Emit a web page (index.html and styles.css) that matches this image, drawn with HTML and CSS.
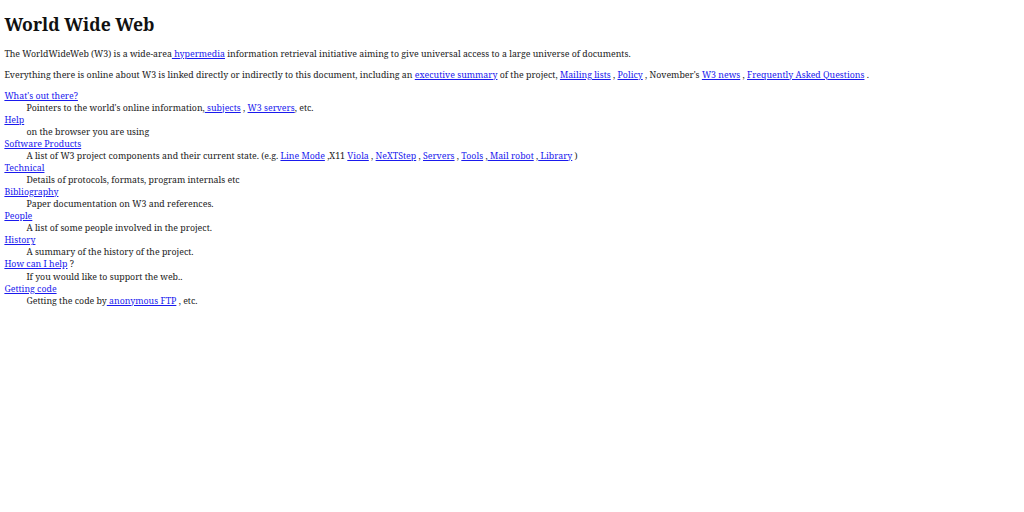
FILE: index.html
```html
<!DOCTYPE html>
<html>
<head>
<meta charset="utf-8">
<title>The World Wide Web project</title>
<link rel="stylesheet" href="styles.css">
</head>
<body>
<h1 class="title">World Wide Web</h1>
<p class="intro">The WorldWideWeb (W3) is a wide-area<a href="#"> hypermedia</a> information retrieval initiative aiming to give universal access to a large universe of documents.</p>
<p class="intro">Everything there is online about W3 is linked directly or indirectly to this document, including an <a href="#">executive summary</a> of the project, <a href="#">Mailing lists</a> , <a href="#">Policy</a> , November's <a href="#">W3 news</a> , <a href="#">Frequently Asked Questions</a> .</p>
<dl class="topics">
<dt><a href="#">What's out there?</a></dt>
<dd>Pointers to the world's online information,<a href="#"> subjects</a> , <a href="#">W3 servers</a>, etc.</dd>
<dt><a href="#">Help</a></dt>
<dd>on the browser you are using</dd>
<dt><a href="#">Software Products</a></dt>
<dd>A list of W3 project components and their current state. (e.g. <a href="#">Line Mode</a> ,X11 <a href="#">Viola</a> , <a href="#">NeXTStep</a> , <a href="#">Servers</a> , <a href="#">Tools</a> ,<a href="#"> Mail robot</a> ,<a href="#"> Library</a> )</dd>
<dt><a href="#">Technical</a></dt>
<dd>Details of protocols, formats, program internals etc</dd>
<dt><a href="#">Bibliography</a></dt>
<dd>Paper documentation on W3 and references.</dd>
<dt><a href="#">People</a></dt>
<dd>A list of some people involved in the project.</dd>
<dt><a href="#">History</a></dt>
<dd>A summary of the history of the project.</dd>
<dt><a href="#">How can I help</a> ?</dt>
<dd>If you would like to support the web..</dd>
<dt><a href="#">Getting code</a></dt>
<dd>Getting the code by<a href="#"> anonymous FTP</a> , etc.</dd>
</dl>
</body>
</html>
```
FILE: styles.css
```css
body {
  margin: 4.4px;
  font-family: "Noto Serif", "DejaVu Serif", serif;
  font-size: 8.8px;
  color: #222;
  background: #fff;
}

.title {
  font-size: 17.6px;
  margin: 7.8px 0 11.8px;
  color: #111;
}

.intro {
  margin: 8.8px 0;
}

.topics {
  margin: 8.8px 0;
  line-height: 12.06px;
}

.topics dd {
  margin-left: 22px;
}

a {
  color: #1a1aee;
}
```
